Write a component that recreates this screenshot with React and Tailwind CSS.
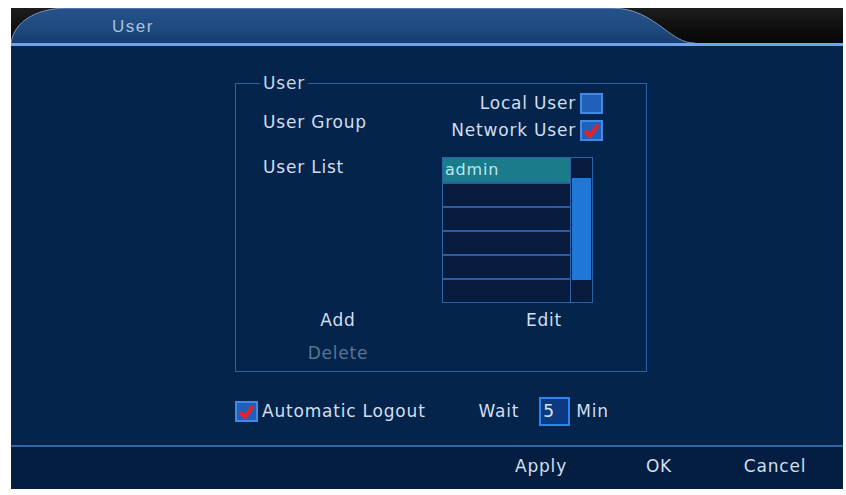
import React from 'react';

const font = { fontFamily: '"DejaVu Sans", Verdana, sans-serif' };

const CheckBox = ({ checked }) => (
  <div className="w-[23px] h-[21px] border-2 border-[#3f8ae6] bg-[#2160b8] flex items-center justify-center">
    {checked && (
      <svg width="17" height="15" viewBox="0 0 17 15">
        <path d="M2 8 L7 13 L15 2" stroke="#e2232c" strokeWidth="4" fill="none" strokeLinejoin="round" />
      </svg>
    )}
  </div>
);

const UserList = () => {
  const rows = ['admin', '', '', '', '', ''];
  return (
    <div className="w-[151px] h-[146px] border border-[#2d64a6] flex bg-[#061b3e]">
      <div className="flex-1 flex flex-col">
        {rows.map((name, i) => (
          <div
            key={i}
            className={`flex-1 flex items-center pl-[2px] text-[16px] ${
              i === 0 ? 'bg-[#1a7b8b] text-[#bfe4ec]' : 'border-t-2 border-[#2a5d9e]'
            }`}
          >
            {name}
          </div>
        ))}
      </div>
      <div className="w-[22px] border-l border-[#2d64a6] flex flex-col">
        <div className="h-[20px]" />
        <div className="h-[102px] mx-[1px] bg-[#1f78d8]" />
        <div className="flex-1" />
      </div>
    </div>
  );
};

export default function App() {
  return (
    <div className="w-[846px] h-[495px] bg-white pl-[11px] pt-[8px]" style={font}>
      <div className="w-[832px] h-[481px] flex flex-col text-[17px] tracking-[0.8px] text-[#d3deec]">
        {/* title tab */}
        <div className="relative h-[35px] bg-gradient-to-b from-[#1d1d1d] to-[#070707]">
          <svg width="832" height="35" viewBox="0 0 832 35" className="absolute inset-0">
            <defs>
              <linearGradient id="tab" x1="0" y1="0" x2="0" y2="1">
                <stop offset="0" stopColor="#25528c" />
                <stop offset="0.55" stopColor="#1f4a80" />
                <stop offset="1" stopColor="#173d6e" />
              </linearGradient>
            </defs>
            <path
              d="M0 35 C3 14 24 1 54 0 L600 0 C624 0 638 10 652 20 C664 29 672 35 684 35 Z"
              fill="url(#tab)"
            />
            <path
              d="M0 35 C3 14 24 1 54 0 L600 0 C624 0 638 10 652 20 C664 29 672 35 684 35"
              stroke="#8fabd2"
              strokeWidth="1"
              fill="none"
              opacity="0.8"
            />
          </svg>
          <div
            className="absolute left-[101px] top-[6px] text-[17px] tracking-[1.5px] text-[#a9c2de]"
            style={{ fontFamily: '"Liberation Sans", Arial, sans-serif' }}
          >
            User
          </div>
        </div>
        <div className="h-[3px] bg-[#6fa5ea]" />

        {/* body */}
        <div className="h-[399px] bg-[#04244c] pl-[224px] pt-[27px] flex flex-col">
          <fieldset className="w-[412px] border border-[#2b62a2] pb-[8px]">
            <legend className="ml-[24px] px-[3px] leading-[20px] text-[#c9d6e6]">User</legend>

            <div className="flex pl-[27px] pr-[43px] justify-between">
              <div className="mt-[19px] leading-[20px]">User Group</div>
              <div className="flex flex-col items-end gap-[6px]">
                <div className="flex items-center h-[21px]">
                  <span className="mr-[4px]">Local User</span>
                  <CheckBox />
                </div>
                <div className="flex items-center h-[21px]">
                  <span className="mr-[4px]">Network User</span>
                  <CheckBox checked />
                </div>
              </div>
            </div>

            <div className="flex pl-[27px] mt-[16px]">
              <div className="w-[179px] leading-[20px]">User List</div>
              <UserList />
            </div>

            <div className="flex pl-[27px] mt-[7px] leading-[20px]">
              <div className="w-[150px] text-center">Add</div>
              <div className="ml-[81px] w-[100px] text-center">Edit</div>
            </div>

            <div className="flex pl-[27px] mt-[13px] leading-[20px]">
              <div className="w-[150px] text-center text-[#5b7494]">Delete</div>
            </div>
          </fieldset>

          <div className="flex items-center mt-[25px] h-[29px]">
            <CheckBox checked />
            <span className="ml-[4px]">Automatic Logout</span>
            <span className="ml-[53px]">Wait</span>
            <div className="ml-[20px] w-[31px] h-[29px] border-2 border-[#2f83ec] bg-[#0b3a82] pl-[2px] flex items-center text-[#d4e4f6]">
              5
            </div>
            <span className="ml-[6px]">Min</span>
          </div>
        </div>

        {/* footer */}
        <div className="h-[2px] bg-[#2f66a6]" />
        <div className="flex-1 bg-[#031e40] flex items-center pl-[480px] pb-[2px]">
          <div className="w-[100px] text-center">Apply</div>
          <div className="ml-[18px] w-[100px] text-center">OK</div>
          <div className="ml-[16px] w-[100px] text-center">Cancel</div>
        </div>
      </div>
    </div>
  );
}
